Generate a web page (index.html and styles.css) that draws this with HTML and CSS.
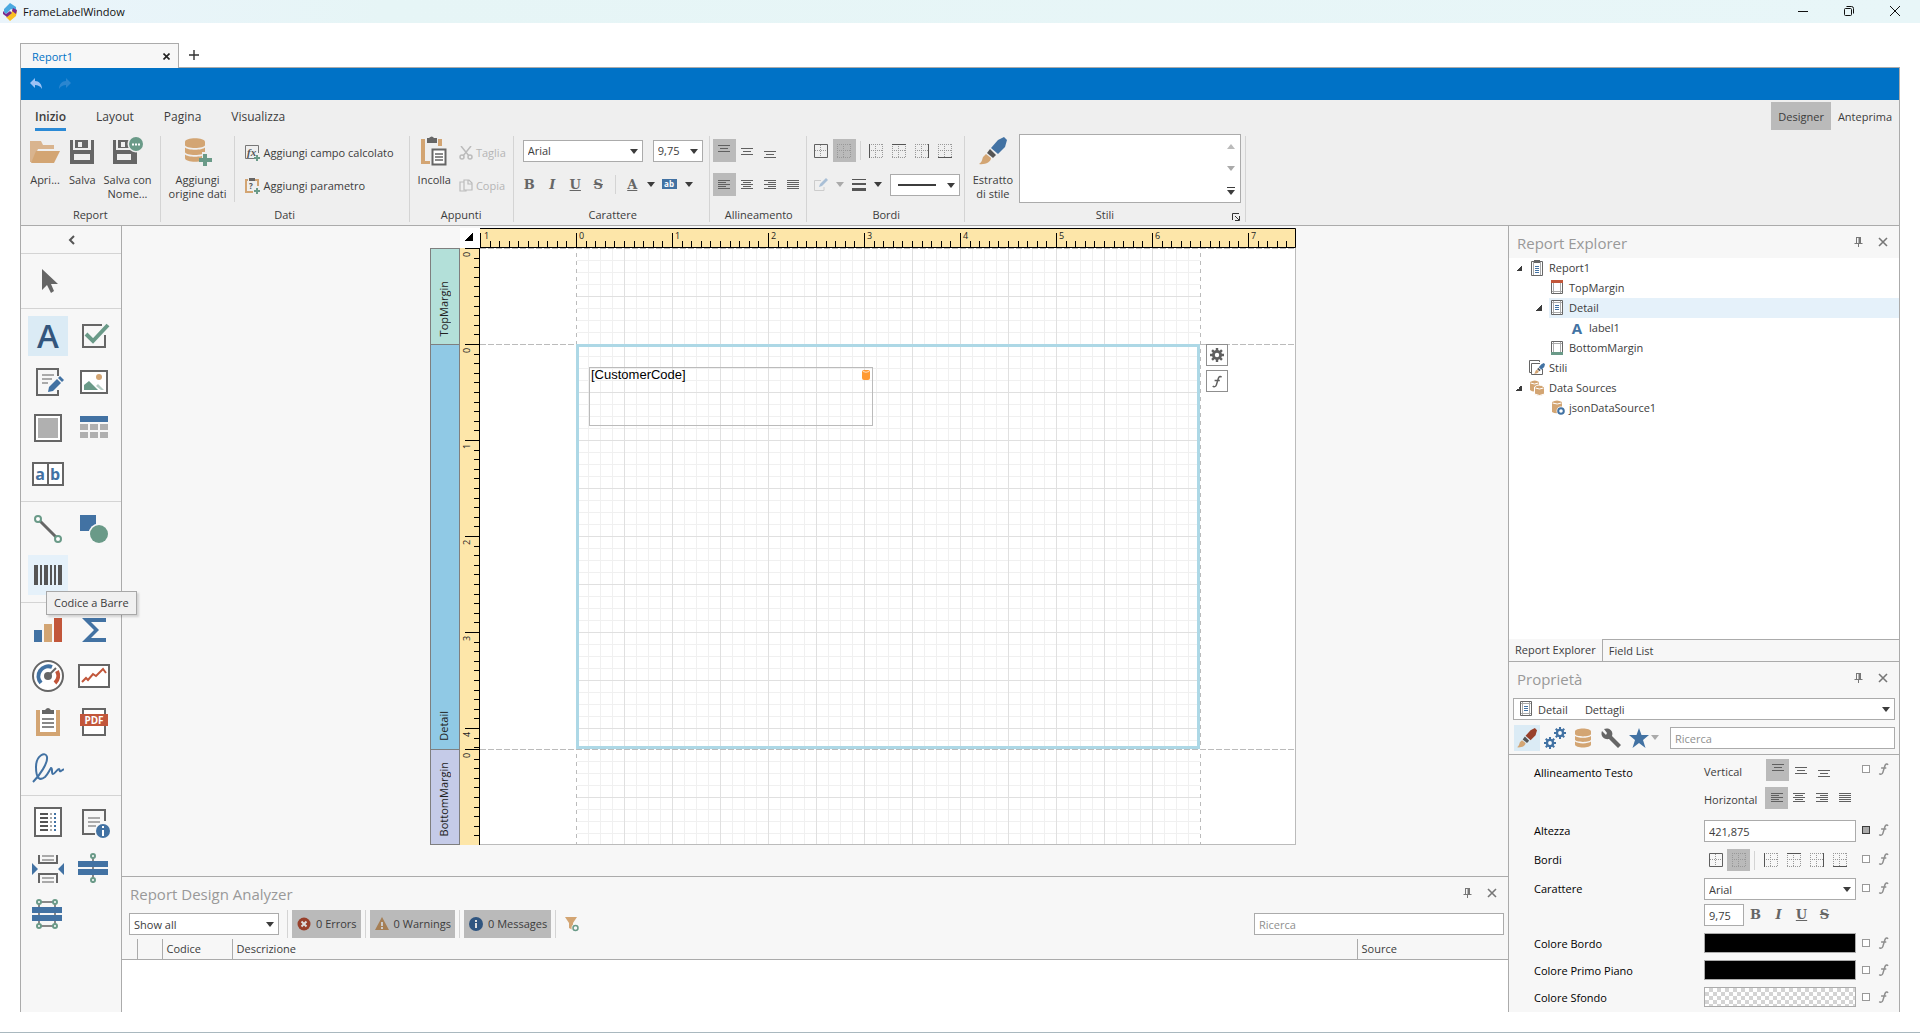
FILE: index.html
```html
<!DOCTYPE html>
<html lang="it">
<head>
    <meta charset="UTF-8">
    <meta name="viewport" content="width=device-width, initial-scale=1.0">
    <title>FrameLabelWindow</title>
    <link rel="stylesheet" href="styles.css">
</head>
<body>

    <!-- Shared icons -->
    <svg class="sprite" aria-hidden="true">
        <symbol id="i-pin" viewBox="0 0 9 10"><path d="M2 0h5v6h1.500v1h-3.500v3h-1v-3H.5V6H2zM3 1v5h1.500V1z" fill="#777" fill-rule="evenodd"/></symbol>
        <symbol id="i-close" viewBox="0 0 10 10"><path d="M1 1l8 8M9 1L1 9" stroke="#777" stroke-width="1.600" fill="none"/></symbol>
        <symbol id="i-top" viewBox="0 0 14 14"><path d="M1 1.500h12M3 4.500h8M1 7.500h12" stroke="#606060"/></symbol>
        <symbol id="i-middle" viewBox="0 0 14 14"><path d="M1 4.500h12M3 7.500h8M1 10.500h12" stroke="#606060"/></symbol>
        <symbol id="i-bottom" viewBox="0 0 14 14"><path d="M1 7.500h12M3 10.500h8M1 13.500h12" stroke="#606060"/></symbol>
        <symbol id="i-left" viewBox="0 0 14 14"><path d="M1 2.500h12M1 4.500h8M1 6.500h12M1 8.500h8M1 10.500h12" stroke="#606060"/></symbol>
        <symbol id="i-center" viewBox="0 0 14 14"><path d="M1 2.500h12M3 4.500h8M1 6.500h12M3 8.500h8M1 10.500h12" stroke="#606060"/></symbol>
        <symbol id="i-right" viewBox="0 0 14 14"><path d="M1 2.500h12M5 4.500h8M1 6.500h12M5 8.500h8M1 10.500h12" stroke="#606060"/></symbol>
        <symbol id="i-justify" viewBox="0 0 14 14"><path d="M1 2.500h12M1 4.500h12M1 6.500h12M1 8.500h12M1 10.500h12" stroke="#606060"/></symbol>
        <symbol id="i-dots" viewBox="0 0 14 14"><path d="M0 .5h14M0 6.500h14M0 13.500h14M.5 0v14M6.500 0v14M13.500 0v14" stroke="#999" stroke-dasharray="1 1" fill="none"/></symbol>
        <symbol id="i-ball" viewBox="0 0 14 14"><path d="M1 6.500h12M6.500 1v12" stroke="#999" stroke-dasharray="1 1"/><path d="M.5.5h13v13H.5z" stroke="#606060" fill="none"/></symbol>
        <symbol id="i-bleft" viewBox="0 0 14 14"><use href="#i-dots"/><path d="M.5 0v14" stroke="#555"/></symbol>
        <symbol id="i-btop" viewBox="0 0 14 14"><use href="#i-dots"/><path d="M0 .5h14" stroke="#555"/></symbol>
        <symbol id="i-bright" viewBox="0 0 14 14"><use href="#i-dots"/><path d="M13.500 0v14" stroke="#555"/></symbol>
        <symbol id="i-bbottom" viewBox="0 0 14 14"><use href="#i-dots"/><path d="M0 13.500h14" stroke="#555"/></symbol>
        <symbol id="i-func" viewBox="0 0 10 12"><path d="M9.500 1.800C8.800.6 7 .8 6.400 2.800L4.300 9.600C3.800 11.200 1.800 11.800.8 10.600M2.600 5h5.200" fill="none" stroke="currentColor" stroke-width="1.500"/></symbol>
        <symbol id="i-doc" viewBox="0 0 16 16"><path d="M1.500.5h11v14h-11z" fill="#fff" stroke="#666"/><path d="M3.500 1v13M10.500 1v13M2 2.500h10M2 12.500h10" stroke="#aaa"/><path d="M5 5.500h4M5 7.500h4M5 9.500h4" stroke="#4272a3"/></symbol>
        <symbol id="i-brush" viewBox="0 0 28 28"><path d="M25 0l3 3-2 7-7 7-7-6 7-8z" fill="currentColor"/><path d="M11 12l6 6-3 3-6-5z" fill="#555"/><path d="M7 17l5 4c0 4-6 7-12 6 3-2 3-4 4-7z" fill="#d3a573"/></symbol>
        <symbol id="i-db" viewBox="0 0 20 24"><path d="M0 4c0-5 20-5 20 0v3c0 4-20 4-20 0zM0 9.500c3 3 17 3 20 0V14c0 4-20 4-20 0zM0 16.500c3 3 17 3 20 0V20c0 5-20 5-20 0z" fill="#d3a573"/></symbol>
        <symbol id="i-gear" viewBox="0 0 14 14"><g fill="currentColor"><path d="M5.800 0h2.400v14H5.800zM0 5.800h14v2.400H0z"/><path d="M5.800 0h2.400v14H5.800zM0 5.800h14v2.400H0z" transform="rotate(45 7 7)"/><circle cx="7" cy="7" r="5"/></g><circle cx="7" cy="7" r="2.200" fill="#fff"/></symbol>
    </svg>

    <!-- Title bar -->
    <header class="titlebar">
        <svg class="app-logo" width="15" height="20" viewBox="0 0 15 20">
            <path d="M1 7l6-6 6 4v4l-5-2-5 5-2-2z" fill="#4aa8e0"/>
            <path d="M14 9l-1 5-6 5-4-4 5-4 2-4z" fill="#fbbf24"/>
            <path d="M0 9l3 3 4-3 2 2-5 4-4-3zM10 6l4 2-1 4-4-3z" fill="#7a2a8c"/>
        </svg>
        <span class="app-title">FrameLabelWindow</span>
        <button class="win-btn" aria-label="Minimize"><svg width="10" height="10"><path d="M0 5.500h10" stroke="#111"/></svg></button>
        <button class="win-btn" aria-label="Restore"><svg width="10" height="10" fill="none" stroke="#111"><rect x=".5" y="2.500" width="7" height="7" rx="1"/><path d="M2.500.5h5q2 0 2 2v5"/></svg></button>
        <button class="win-btn" aria-label="Close"><svg width="10" height="10"><path d="M0 0l10 10M10 0L0 10" stroke="#111"/></svg></button>
    </header>

    <main class="workspace">
        <!-- Document tabs -->
        <div class="doc-tabs">
            <div class="doc-tab"><span>Report1</span><button class="plain" aria-label="Close tab"><svg width="7" height="7"><path d="M.5.5l6 6M6.500.5l-6 6" stroke="#222" stroke-width="1.600"/></svg></button></div>
            <button class="plain add-tab" aria-label="New report"><svg width="10" height="10"><path d="M5 0v10M0 5h10" stroke="#333" stroke-width="1.400"/></svg></button>
        </div>

        <div class="designer">
            <!-- Quick access -->
            <div class="quickbar">
                <button class="plain" aria-label="Undo"><svg width="12" height="12"><path d="M0 5l5-5v3c4 0 7 3 7 8-2-3-4-4-7-4v3z" fill="#9cc2f5"/></svg></button>
                <button class="plain" aria-label="Redo"><svg width="12" height="12"><path d="M12 5L7 0v3C3 3 0 6 0 11c2-3 4-4 7-4v3z" fill="#2a86d0"/></svg></button>
            </div>

            <!-- Ribbon -->
            <div class="ribbon">
                <nav class="ribbon-tabs">
                    <a href="#" class="active">Inizio</a>
                    <a href="#">Layout</a>
                    <a href="#">Pagina</a>
                    <a href="#">Visualizza</a>
                    <span class="modes">
                        <button class="mode on">Designer</button>
                        <button class="mode">Anteprima</button>
                    </span>
                </nav>
                <div class="groups">
                    <section class="group">
                        <div class="group-body">
                            <button class="big">
                                <svg width="32" height="30"><path d="M1 26V5h11l2 4h11v4H9L3 26z" fill="#d9b48e"/><path d="M7 15h24l-6 12H2z" fill="#d3a573"/></svg>
                                Apri...
                            </button>
                            <button class="big">
                                <svg width="26" height="30"><path d="M1 4h3v10h18V4h3v24H1z" fill="#666"/><path d="M6 4h13v8H6z" fill="#666"/><path d="M9 6h4v5H9zM5 18h16v6H5z" fill="#efefef"/></svg>
                                Salva
                            </button>
                            <button class="big">
                                <svg width="32" height="30"><path d="M1 4h3v10h16V4h5v24H1z" fill="#666"/><path d="M6 4h13v8H6z" fill="#666"/><path d="M9 6h4v5H9zM5 18h14v6H5z" fill="#efefef"/><circle cx="24" cy="8" r="8.500" fill="#efefef"/><circle cx="24" cy="8" r="7" fill="#6a9a88"/><path d="M20 7.500h2v2h-2zM23 7.500h2v2h-2zM26 7.500h2v2h-2z" fill="#fff"/></svg>
                                Salva con<br>Nome...
                            </button>
                        </div>
                        <h3>Report</h3>
                    </section>

                    <section class="group">
                        <div class="group-body">
                            <button class="big">
                                <svg width="28" height="30"><use href="#i-db" x="1" y="2" width="20" height="24"/><path d="M18 16h9v6h-9z" fill="#efefef"/><path d="M19 18h4v4h5v4h-5v4h-4v-4h-4v-4h4z" fill="#6a9a88"/></svg>
                                Aggiungi<br>origine dati
                            </button>
                            <div class="small-list ruled">
                                <button class="small"><svg width="16" height="16"><path d="M9 13.500H.5V.5h13V8" fill="none" stroke="#777"/><text x="2" y="11" font-family="Liberation Serif, serif" font-style="italic" font-weight="bold" font-size="11" fill="#555">fx</text><path d="M12 10v6M9 13h6" stroke="#6a9a88" stroke-width="2"/></svg>Aggiungi campo calcolato</button>
                                <button class="small"><svg width="16" height="16"><path d="M3 2H1v12h7M10 2h3v6" fill="none" stroke="#d3a573" stroke-width="2"/><path d="M4 0h6v3H4z" fill="#666"/><text x="4" y="11" font-family="Open Sans, sans-serif" font-weight="bold" font-size="8" fill="#555">?</text><path d="M12 10v6M9 13h6" stroke="#6a9a88" stroke-width="2"/></svg>Aggiungi parametro</button>
                            </div>
                        </div>
                        <h3>Dati</h3>
                    </section>

                    <section class="group">
                        <div class="group-body">
                            <button class="big">
                                <svg width="28" height="30"><path d="M1 3h4v22h5v3H1zM18 3h4v7h-4z" fill="#d3a573"/><path d="M7 2h2q3-3 5 0h3v5H7z" fill="#666"/><path d="M12.500 13.500h13v15h-13z" fill="#fff" stroke="#666" stroke-width="2"/><path d="M15 18h8M15 21h8M15 24h8" stroke="#666" stroke-width="1.500"/></svg>
                                Incolla
                            </button>
                            <div class="small-list">
                                <button class="small" disabled><svg width="14" height="14" fill="none" stroke="#bbb" stroke-width="1.500"><path d="M2 0l8 10M12 0L4 10"/><circle cx="3" cy="11" r="2"/><circle cx="11" cy="11" r="2"/></svg>Taglia</button>
                                <button class="small" disabled><svg width="14" height="14" fill="#efefef" stroke="#bbb" stroke-width="1.200"><path d="M1 3h6v9H1z"/><path d="M5 1h5l3 3v7H5zM9 1v4h4"/></svg>Copia</button>
                            </div>
                        </div>
                        <h3>Appunti</h3>
                    </section>

                    <section class="group padded">
                        <div class="group-body rows">
                            <div class="line spread">
                                <span class="select font-name"><select aria-label="Font"><option>Arial</option></select></span>
                                <span class="select font-size"><select aria-label="Size"><option>9,75</option></select></span>
                            </div>
                            <div class="line">
                                <button class="glyph">B</button>
                                <button class="glyph"><i>I</i></button>
                                <button class="glyph"><u>U</u></button>
                                <button class="glyph"><s>S</s></button>
                                <span class="vsep"></span>
                                <button class="glyph"><u>A</u></button><button class="plain arrow" aria-label="Font colour"></button>
                                <button class="tool"><svg width="16" height="12"><path d="M0 0h15v10H0z" fill="#4272a3"/><text x="7" y="8" text-anchor="middle" font-family="Open Sans, sans-serif" font-weight="bold" font-size="8" fill="#fff">ab</text></svg></button><button class="plain arrow" aria-label="Highlight colour"></button>
                            </div>
                        </div>
                        <h3>Carattere</h3>
                    </section>

                    <section class="group tight">
                        <div class="group-body rows">
                            <div class="line">
                                <button class="tool on"><svg class="i14"><use href="#i-top"/></svg></button>
                                <button class="tool"><svg class="i14"><use href="#i-middle"/></svg></button>
                                <button class="tool"><svg class="i14"><use href="#i-bottom"/></svg></button>
                            </div>
                            <div class="line">
                                <button class="tool on"><svg class="i14"><use href="#i-left"/></svg></button>
                                <button class="tool"><svg class="i14"><use href="#i-center"/></svg></button>
                                <button class="tool"><svg class="i14"><use href="#i-right"/></svg></button>
                                <button class="tool"><svg class="i14"><use href="#i-justify"/></svg></button>
                            </div>
                        </div>
                        <h3>Allineamento</h3>
                    </section>

                    <section class="group tight">
                        <div class="group-body rows">
                            <div class="line">
                                <button class="tool"><svg class="i14"><use href="#i-ball"/></svg></button>
                                <button class="tool on"><svg class="i14"><use href="#i-dots"/></svg></button>
                                <span class="vsep"></span>
                                <button class="tool"><svg class="i14"><use href="#i-bleft"/></svg></button>
                                <button class="tool"><svg class="i14"><use href="#i-btop"/></svg></button>
                                <button class="tool"><svg class="i14"><use href="#i-bright"/></svg></button>
                                <button class="tool"><svg class="i14"><use href="#i-bbottom"/></svg></button>
                            </div>
                            <div class="line">
                                <button class="tool" disabled><svg class="i14" viewBox="0 0 14 14"><path d="M7 2.500H.5v10H10V9" fill="none" stroke="#ccc"/><path d="M5 9l1-3 6-6 2 2-6 6z" fill="#a9bfd6"/></svg></button><button class="plain arrow off" disabled aria-label="Border colour"></button>
                                <button class="tool"><svg class="i14" viewBox="0 0 14 14"><path d="M0 1h14v1H0zM0 5h14v2H0zM0 10h14v3H0z" fill="#555"/></svg></button><button class="plain arrow" aria-label="Border width"></button>
                                <span class="select line-style"><select aria-label="Border style"><option></option></select></span>
                            </div>
                        </div>
                        <h3>Bordi</h3>
                    </section>

                    <section class="group">
                        <div class="group-body">
                            <button class="big">
                                <svg class="blue" width="28" height="30"><use href="#i-brush" y="1" width="28" height="28"/></svg>
                                Estratto<br>di stile
                            </button>
                            <div class="gallery">
                                <button class="plain arrow up off" aria-label="Scroll up"></button>
                                <button class="plain arrow off" aria-label="Scroll down"></button>
                                <button class="plain arrow more" aria-label="More styles"></button>
                            </div>
                        </div>
                        <h3>Stili</h3>
                        <button class="plain launcher" aria-label="Styles"><svg width="8" height="8"><path d="M.5 7V.5H7M3 3l4 4M7.500 3v4.500H3" stroke="#333" fill="none"/></svg></button>
                    </section>
                </div>
            </div>

            <div class="panes">
                <!-- Toolbox -->
                <aside class="toolbox">
                    <button class="plain collapse" aria-label="Collapse"><svg width="7" height="10"><path d="M6 1L2 5l4 4" fill="none" stroke="#555" stroke-width="2"/></svg></button>
                    <div class="tools">
                        <button><svg width="32" height="32" viewBox="0 0 32 32"><path d="M10 4l16 15h-7l3 7-3 2-4-8-5 5z" fill="#666"/></svg></button>
                    </div>
                    <div class="tools">
                        <button class="on letter">A</button>
                        <button><svg width="32" height="32"><path d="M24 5H5v22h22V15" fill="none" stroke="#666" stroke-width="2"/><path d="M8 14l7 7L30 5" fill="none" stroke="#6a9a88" stroke-width="4"/></svg></button>
                        <button><svg width="32" height="32"><path d="M26 10V3H5v26h21v-5" fill="none" stroke="#666" stroke-width="2"/><path d="M10 9h12M10 13h10M10 17h6" stroke="#aaa" stroke-width="2"/><path d="M16 26l1-5 8-8 4 4-8 8zM26 12l2-2 4 4-2 2z" fill="#4272a3"/></svg></button>
                        <button><svg width="32" height="32"><path d="M3 5h26v22H3z" fill="#fff" stroke="#666" stroke-width="2"/><path d="M6 24v-5l5-4 9 9z" fill="#6a9a88"/><path d="M18 20l2-2 6 6h-3z" fill="#b5ccc4"/><circle cx="21" cy="11" r="3" fill="#d3a573"/></svg></button>
                        <button><svg width="32" height="32"><path d="M3 3h26v26H3z" fill="#fff" stroke="#666" stroke-width="2"/><path d="M6 6h20v20H6z" fill="#b0b0b0"/></svg></button>
                        <button><svg width="32" height="32"><path d="M2 4h28v6H2z" fill="#4272a3"/><path d="M2 12h8v6H2zM12 12h8v6h-8zM22 12h8v6h-8zM2 20h8v6H2zM12 20h8v6h-8zM22 20h8v6h-8z" fill="#b0b0b0"/></svg></button>
                        <button><svg width="32" height="32"><path d="M1 5h30v22H1zM16 5v22" fill="#fff" stroke="#666" stroke-width="2"/><text x="8" y="22" text-anchor="middle" font-family="Open Sans, sans-serif" font-weight="bold" font-size="16" fill="#4272a3">a</text><text x="23" y="22" text-anchor="middle" font-family="Open Sans, sans-serif" font-weight="bold" font-size="16" fill="#4272a3">b</text></svg></button>
                    </div>
                    <div class="tools">
                        <button><svg width="32" height="32"><path d="M6 6l20 20" stroke="#666" stroke-width="3"/><g fill="#fff" stroke="#6a9a88" stroke-width="2"><circle cx="6" cy="6" r="3"/><circle cx="26" cy="26" r="3"/></g></svg></button>
                        <button><svg width="32" height="32"><path d="M2 2h16v16H2z" fill="#4272a3"/><circle cx="21" cy="21" r="10.500" fill="#f7f7f7"/><circle cx="21" cy="21" r="9" fill="#6a9a88"/></svg></button>
                        <button class="hover" aria-describedby="tip"><svg width="32" height="32"><path d="M2 6h4v20H2zM8 6h2v20H8zM12 6h4v20h-4zM18 6h2v20h-2zM22 6h2v20h-2zM26 6h4v20h-4z" fill="#555"/></svg></button>
                        <span class="tooltip" id="tip" role="tooltip">Codice a Barre</span>
                    </div>
                    <div class="tools">
                        <button><svg width="32" height="32"><path d="M2 16h8v12H2z" fill="#4272a3"/><path d="M12 10h8v18h-8z" fill="#d3a573"/><path d="M22 4h8v24h-8z" fill="#c2563a"/></svg></button>
                        <button><svg width="32" height="32"><path d="M4 4h24v4H13l8 8-8 8h15v4H4l12-12z" fill="#4272a3"/></svg></button>
                        <button><svg width="32" height="32" fill="none"><circle cx="16" cy="16" r="15" fill="#fff" stroke="#666" stroke-width="2"/><path d="M9 23A10 10 0 0 1 20 7" stroke="#4272a3" stroke-width="4"/><path d="M25 11a10 10 0 0 1-2 12" stroke="#c2563a" stroke-width="4"/><path d="M16 16l8-8" stroke="#666" stroke-width="2"/><circle cx="16" cy="16" r="4" fill="#666"/></svg></button>
                        <button><svg width="32" height="32" fill="none"><path d="M1 5h30v22H1z" fill="#fff" stroke="#666" stroke-width="2"/><path d="M4 22l4-4 2 2 5-6 3 2 7-7 3 4" stroke="#c2563a" stroke-width="2"/></svg></button>
                        <button><svg width="32" height="32"><path d="M4 4h6v22h12V4h6v26H4z" fill="#d3a573"/><path d="M8 4h16v22H8z" fill="#fff"/><path d="M10 4h3q3-4 6 0h3v4H10z" fill="#666"/><path d="M10 13h12M10 17h12M10 21h12" stroke="#888" stroke-width="2"/></svg></button>
                        <button><svg width="32" height="32"><path d="M5 3h22v26H5z" fill="#fff" stroke="#666" stroke-width="2"/><path d="M2 8h28v12H2z" fill="#c2563a"/><text x="16" y="18" text-anchor="middle" font-family="Open Sans, sans-serif" font-weight="bold" font-size="10" fill="#fff">PDF</text></svg></button>
                        <button><svg width="32" height="32"><path d="M1 30C8 23 16 11 15 5 14-1 4 3 4 15c0 12 4 14 9 10 3-3 4-6 6-9 2 0 0 6 2 6s4-5 6-5c1 0 0 3 2 2l3-2" fill="none" stroke="#4272a3" stroke-width="2"/></svg></button>
                    </div>
                    <div class="tools">
                        <button><svg width="32" height="32"><path d="M3 1h26v28H3z" fill="#fff" stroke="#666" stroke-width="2"/><path d="M8 7h8M8 11h8M8 15h8M8 19h8M8 23h8" stroke="#555" stroke-width="2"/><path d="M19 6v18" stroke="#aaa" stroke-width="2" stroke-dasharray="2"/><path d="M23 6v18" stroke="#4272a3" stroke-width="2" stroke-dasharray="2"/></svg></button>
                        <button><svg width="32" height="32"><path d="M27 14V3H5v24h12" fill="none" stroke="#666" stroke-width="2"/><path d="M10 11h12M10 15h12M10 19h8" stroke="#aaa" stroke-width="2"/><circle cx="25" cy="24" r="7" fill="#4272a3"/><path d="M24 19h2v2h-2zM24 23h2v6h-2z" fill="#fff"/></svg></button>
                        <button><svg width="32" height="32"><path d="M0 10l6 6-6 6zM32 10l-6 6 6 6z" fill="#4272a3"/><path d="M7 2v8h18V2M7 30v-9h18v9" fill="none" stroke="#666" stroke-width="2"/><path d="M10 3h12M10 7h12M10 25h12M10 29h12" stroke="#aaa" stroke-width="2"/></svg></button>
                        <button><svg width="32" height="32"><path d="M15 2v28" stroke="#888" stroke-width="2"/><path d="M0 8h30v6H0zM0 16h30v6H0z" fill="#4272a3"/><g fill="#fff" stroke="#6a9a88" stroke-width="2"><circle cx="15" cy="3" r="2"/><circle cx="15" cy="27" r="2"/></g></svg></button>
                        <button><svg width="32" height="32"><path d="M7 3h16v24H7z" fill="none" stroke="#888" stroke-width="2"/><path d="M0 8h30v6H0zM0 16h30v6H0z" fill="#4272a3"/><g fill="#fff" stroke="#6a9a88" stroke-width="2"><circle cx="7" cy="3" r="2"/><circle cx="23" cy="3" r="2"/><circle cx="7" cy="27" r="2"/><circle cx="23" cy="27" r="2"/></g></svg></button>
                    </div>
                </aside>

                <!-- Design surface and analyzer -->
                <div class="center">
                    <div class="surface">
                        <div class="canvas">
                            <div class="canvas-head">
                                <div class="corner"></div>
                                <svg class="ruler-x" width="816" height="20">
                                    <defs><path id="inch" d="M.5 5v15M10.500 13v7M19.500 13v7M29.500 13v7M38.500 13v7M48.500 13v7M58.500 13v7M67.500 13v7M77.500 13v7M86.500 13v7" stroke="#000"/></defs>
                                    <rect width="816" height="20" fill="#fde6a9"/>
                                    <use href="#inch"/><use href="#inch" x="96"/><use href="#inch" x="192"/><use href="#inch" x="288"/><use href="#inch" x="384"/><use href="#inch" x="480"/><use href="#inch" x="576"/><use href="#inch" x="672"/><use href="#inch" x="768"/>
                                    <path d="M0 .5h815.500v19H0" fill="none" stroke="#000"/>
                                    <g class="ruler-text"><text x="4" y="11">1</text><text x="99" y="11">0</text><text x="195" y="11">1</text><text x="291" y="11">2</text><text x="387" y="11">3</text><text x="483" y="11">4</text><text x="579" y="11">5</text><text x="675" y="11">6</text><text x="771" y="11">7</text></g>
                                </svg>
                            </div>
                            <div class="band top-band">
                                <div class="band-name"><span>TopMargin</span></div>
                                <svg class="ruler-y" width="20" height="96">
                                    <defs><path id="inch-y" d="M5 .5h14M14 10.500h5M14 19.500h5M14 29.500h5M14 38.500h5M14 48.500h5M14 58.500h5M14 67.500h5M14 77.500h5M14 86.500h5" stroke="#000"/></defs>
                                    <use href="#inch-y"/><path d="M19.500 0v96" stroke="#000"/>
                                    <g class="ruler-text"><text transform="translate(10 9) rotate(-90)">0</text></g>
                                </svg>
                                <div class="page"><div class="grid"></div></div>
                            </div>
                            <div class="band detail-band">
                                <div class="band-name"><span>Detail</span></div>
                                <svg class="ruler-y" width="20" height="405">
                                    <use href="#inch-y"/><use href="#inch-y" y="96"/><use href="#inch-y" y="192"/><use href="#inch-y" y="288"/><use href="#inch-y" y="384"/><path d="M19.500 0v405" stroke="#000"/>
                                    <g class="ruler-text"><text transform="translate(10 9) rotate(-90)">0</text><text transform="translate(10 105) rotate(-90)">1</text><text transform="translate(10 201) rotate(-90)">2</text><text transform="translate(10 297) rotate(-90)">3</text><text transform="translate(10 393) rotate(-90)">4</text></g>
                                </svg>
                                <div class="page">
                                    <div class="grid"><div class="selection"></div></div>
                                    <div class="label-item">[CustomerCode]<svg width="8" height="12"><rect y="2" width="8" height="10" rx="2" fill="#ff9a33"/><path d="M1 3.500q3 1.500 6 0" fill="none" stroke="#ffe0c0"/></svg></div>
                                    <div class="smart-tags">
                                        <button aria-label="Settings"><svg width="14" height="14"><use href="#i-gear"/></svg></button>
                                        <button aria-label="Expression"><svg width="10" height="13"><use href="#i-func"/></svg></button>
                                    </div>
                                </div>
                            </div>
                            <div class="band bottom-band">
                                <div class="band-name"><span>BottomMargin</span></div>
                                <svg class="ruler-y" width="20" height="96">
                                    <use href="#inch-y"/><path d="M19.500 0v96" stroke="#000"/>
                                    <g class="ruler-text"><text transform="translate(10 9) rotate(-90)">0</text></g>
                                </svg>
                                <div class="page"><div class="grid"></div></div>
                            </div>
                        </div>
                    </div>

                    <section class="analyzer">
                        <div class="pane-title"><h2>Report Design Analyzer</h2><button class="plain" aria-label="Pin"><svg width="9" height="10"><use href="#i-pin"/></svg></button><button class="plain" aria-label="Close"><svg width="10" height="10"><use href="#i-close"/></svg></button></div>
                        <div class="analyzer-bar">
                            <span class="select show-all"><select aria-label="Show"><option>Show all</option></select></span>
                            <span class="vsep"></span>
                            <button class="filter-btn"><svg width="14" height="14"><circle cx="7" cy="7" r="6.500" fill="#98402b"/><path d="M4.500 4.500l5 5M9.500 4.500l-5 5" stroke="#ddd" stroke-width="2"/></svg>0 Errors</button>
                            <span class="vsep"></span>
                            <button class="filter-btn"><svg width="14" height="14"><path d="M7 0l7 13H0z" fill="#a67f55"/><path d="M6 5h2v4H6zM6 10h2v2H6z" fill="#ccc"/></svg>0 Warnings</button>
                            <span class="vsep"></span>
                            <button class="filter-btn"><svg width="14" height="14"><circle cx="7" cy="7" r="7" fill="#2f5580"/><path d="M6 3h2v2H6zM6 6h2v5H6z" fill="#ddd"/></svg>0 Messages</button>
                            <span class="vsep"></span>
                            <button class="plain clear-filter" aria-label="Clear filter"><svg width="16" height="16"><path d="M1 1h12L9 7v7l-4-2V7z" fill="#d3a573"/><circle cx="11.500" cy="12" r="4" fill="#f7f7f7"/><circle cx="11.500" cy="12" r="2.500" fill="none" stroke="#6a9a88" stroke-width="1.500"/></svg></button>
                            <input type="search" placeholder="Ricerca" aria-label="Ricerca">
                        </div>
                        <table>
                            <thead><tr><th class="c-icon"></th><th class="c-mark"></th><th class="c-code">Codice</th><th>Descrizione</th><th class="c-source">Source</th></tr></thead>
                        </table>
                    </section>
                </div>

                <!-- Explorer and properties -->
                <aside class="side">
                    <section class="explorer">
                        <div class="pane-title"><h2>Report Explorer</h2><button class="plain" aria-label="Pin"><svg width="9" height="10"><use href="#i-pin"/></svg></button><button class="plain" aria-label="Close"><svg width="10" height="10"><use href="#i-close"/></svg></button></div>
                        <ul class="tree">
                            <li class="open"><span><svg class="i16"><path d="M2.500 1.500h11v14h-11z" fill="#fff" stroke="#666"/><path d="M4.500 2v13M11.500 2v13" stroke="#aaa"/><path d="M5 0h6v3H5z" fill="#666"/><path d="M6 6.500h4M6 8.500h4M6 10.500h4M6 12.500h4" stroke="#4272a3"/></svg>Report1</span></li>
                            <li class="l1"><span><svg class="i16"><path d="M2.500 1.500h11v12h-11z" fill="#fff" stroke="#666"/><path d="M4.500 3v10M11.500 3v10M3 11.500h10" stroke="#aaa"/><path d="M2 0h12v3H2z" fill="#c2563a"/></svg>TopMargin</span></li>
                            <li class="l1 open selected"><span><svg class="i16"><use href="#i-doc" x="1" width="16" height="16"/></svg>Detail</span></li>
                            <li class="l2"><span><b class="label-icon">A</b>label1</span></li>
                            <li class="l1"><span><svg class="i16"><path d="M2.500 1.500h11v12h-11z" fill="#fff" stroke="#666"/><path d="M4.500 2v10M11.500 2v10M3 3.500h10" stroke="#aaa"/><path d="M2 12h12v3H2z" fill="#6a9a88"/></svg>BottomMargin</span></li>
                            <li><span><svg class="i16 blue"><path d="M3 12.500H.5V.5h10V2M11 3.500H2.500v11h11V9" fill="none" stroke="#666"/><use href="#i-brush" x="5" y="3" width="11" height="11"/></svg>Stili</span></li>
                            <li class="open"><span><svg class="i16"><path d="M1 2q5-3 9 0v8q-5 3-9 0z" fill="#d3a573"/><path d="M1.500 3q4 2 8 0" stroke="#fff" fill="none"/><path d="M5.500 7q4-4 10 0v7q-5 3-10 0z" fill="#d3a573" stroke="#fff"/><path d="M6.500 8q4 2 8 0" stroke="#fff" fill="none"/></svg>Data Sources</span></li>
                            <li class="l1"><span><svg class="i16"><path d="M3 2q5-3 10 0v9q-5 4-10 1z" fill="#d3a573"/><path d="M3.500 3q5 2 9 0" stroke="#fff" fill="none"/><circle cx="12" cy="11" r="4.500" fill="#fff"/><circle cx="12" cy="11" r="2.800" fill="none" stroke="#4272a3" stroke-width="2"/></svg>jsonDataSource1</span></li>
                        </ul>
                        <div class="side-tabs"><button class="current">Report Explorer</button><button>Field List</button></div>
                    </section>

                    <section class="properties">
                        <div class="pane-title"><h2>Proprietà</h2><button class="plain" aria-label="Pin"><svg width="9" height="10"><use href="#i-pin"/></svg></button><button class="plain" aria-label="Close"><svg width="10" height="10"><use href="#i-close"/></svg></button></div>
                        <div class="object-pick select">
                            <svg class="i16"><use href="#i-doc"/></svg>
                            <select aria-label="Object"><option>Detail&nbsp;&nbsp;&nbsp;&nbsp;&nbsp;&nbsp;Dettagli</option></select>
                        </div>
                        <div class="prop-bar">
                            <button class="on"><svg class="red" width="22" height="20"><use href="#i-brush" width="22" height="20"/></svg></button>
                            <button><svg class="blue" width="22" height="22"><use href="#i-gear" x="10" y="0" width="12" height="12"/><use href="#i-gear" x="0" y="10" width="12" height="12"/></svg></button>
                            <button><svg width="16" height="20"><use href="#i-db" width="16" height="20"/></svg></button>
                            <button><svg width="20" height="20"><path d="M6 5l-3-4C7-1 13 2 11 8l9 9-3 3-9-9C3 12-1 8 1 3l4 4z" fill="#666"/></svg></button>
                            <button><svg width="20" height="20"><path d="M10 0l2.500 7H20l-6 5 2.500 8L10 15l-6.500 5L6 12 0 7h7.500z" fill="#4272a3"/></svg></button>
                            <button class="plain arrow off" aria-label="Favorites"></button>
                            <input type="search" placeholder="Ricerca" aria-label="Ricerca">
                        </div>
                        <div class="prop-list">
                            <div class="prop first">
                                <span class="name">Allineamento Testo</span>
                                <div class="value">
                                    <div class="line"><span class="sub">Vertical</span>
                                        <button class="tool on"><svg class="i14"><use href="#i-top"/></svg></button>
                                        <button class="tool"><svg class="i14"><use href="#i-middle"/></svg></button>
                                        <button class="tool"><svg class="i14"><use href="#i-bottom"/></svg></button>
                                    </div>
                                    <div class="line"><span class="sub">Horizontal</span>
                                        <button class="tool on"><svg class="i14"><use href="#i-left"/></svg></button>
                                        <button class="tool"><svg class="i14"><use href="#i-center"/></svg></button>
                                        <button class="tool"><svg class="i14"><use href="#i-right"/></svg></button>
                                        <button class="tool"><svg class="i14"><use href="#i-justify"/></svg></button>
                                    </div>
                                </div>
                                <input type="checkbox" aria-label="Allineamento Testo"><svg class="func"><use href="#i-func"/></svg>
                            </div>
                            <div class="prop">
                                <label class="name" for="height">Altezza</label>
                                <div class="value"><input type="text" id="height" value="421,875"></div>
                                <input type="checkbox" checked aria-label="Altezza"><svg class="func"><use href="#i-func"/></svg>
                            </div>
                            <div class="prop">
                                <span class="name">Bordi</span>
                                <div class="value">
                                    <div class="line">
                                        <button class="tool"><svg class="i14"><use href="#i-ball"/></svg></button>
                                        <button class="tool on"><svg class="i14"><use href="#i-dots"/></svg></button>
                                        <span class="vsep"></span>
                                        <button class="tool"><svg class="i14"><use href="#i-bleft"/></svg></button>
                                        <button class="tool"><svg class="i14"><use href="#i-btop"/></svg></button>
                                        <button class="tool"><svg class="i14"><use href="#i-bright"/></svg></button>
                                        <button class="tool"><svg class="i14"><use href="#i-bbottom"/></svg></button>
                                    </div>
                                </div>
                                <input type="checkbox" aria-label="Bordi"><svg class="func"><use href="#i-func"/></svg>
                            </div>
                            <div class="prop">
                                <label class="name" for="font">Carattere</label>
                                <div class="value">
                                    <span class="select"><select id="font"><option>Arial</option></select></span>
                                    <div class="line">
                                        <input type="text" class="size" value="9,75" aria-label="Size">
                                        <button class="glyph">B</button>
                                        <button class="glyph"><i>I</i></button>
                                        <button class="glyph"><u>U</u></button>
                                        <button class="glyph"><s>S</s></button>
                                    </div>
                                </div>
                                <input type="checkbox" aria-label="Carattere"><svg class="func"><use href="#i-func"/></svg>
                            </div>
                            <div class="prop">
                                <span class="name">Colore Bordo</span>
                                <div class="value"><button class="swatch" aria-label="Colore Bordo"></button></div>
                                <input type="checkbox" aria-label="Colore Bordo"><svg class="func"><use href="#i-func"/></svg>
                            </div>
                            <div class="prop">
                                <span class="name">Colore Primo Piano</span>
                                <div class="value"><button class="swatch" aria-label="Colore Primo Piano"></button></div>
                                <input type="checkbox" aria-label="Colore Primo Piano"><svg class="func"><use href="#i-func"/></svg>
                            </div>
                            <div class="prop">
                                <span class="name">Colore Sfondo</span>
                                <div class="value"><button class="swatch clear" aria-label="Colore Sfondo"></button></div>
                                <input type="checkbox" aria-label="Colore Sfondo"><svg class="func"><use href="#i-func"/></svg>
                            </div>
                        </div>
                    </section>
                </aside>
            </div>
        </div>
    </main>

</body>
</html>
```

FILE: styles.css
```css
* {
    box-sizing: border-box;
}
body {
    font-family: "Open Sans", "Noto Sans", sans-serif;
    font-size: 11px;
    line-height: 14px;
    color: #3c3c3c;
    margin: 0;
    height: 100vh;
    display: flex;
    flex-direction: column;
    background: white;
    border-bottom: 1px solid #a9b8bf;
    overflow: hidden;
}
button, input, select {
    font: inherit;
    color: inherit;
    margin: 0;
}
button {
    background: none;
    border: none;
    padding: 0;
    display: flex;
    align-items: center;
    justify-content: center;
}
svg {
    display: block;
    flex: none;
}
h2, h3 {
    margin: 0;
    font-weight: normal;
}
.sprite {
    position: absolute;
    width: 0;
    height: 0;
}
.i14 {
    width: 14px;
    height: 14px;
}
.i16 {
    width: 16px;
    height: 16px;
}
.blue {
    color: #4272a3;
}
.red {
    color: #98402b;
}

/* Title bar */
.titlebar {
    height: 23px;
    flex: none;
    display: flex;
    align-items: center;
    padding: 0 2px 0 3px;
    background: linear-gradient(90deg, #eaf4fb, #e6f5f6 20%, #e8f6f8);
}
.app-title {
    flex: 1;
    margin-left: 5px;
    color: #111;
}
.win-btn {
    width: 46px;
    height: 22px;
    padding-bottom: 2px;
}

.workspace {
    flex: 1;
    min-height: 0;
    display: flex;
    flex-direction: column;
    padding: 20px 20px;
}
.doc-tabs {
    display: flex;
    height: 25px;
    flex: none;
}
.doc-tab {
    width: 159px;
    display: flex;
    align-items: center;
    justify-content: space-between;
    padding: 1px 8px 0 11px;
    background: #f7f7f7;
    border: 1px solid #ababab;
    border-bottom: none;
    color: #0072c6;
}
.add-tab {
    width: 29px;
    border-bottom: 1px solid #ababab;
}
.doc-tabs::after {
    content: "";
    flex: 1;
    border-bottom: 1px solid #ababab;
}
.designer {
    flex: 1;
    min-height: 0;
    display: flex;
    flex-direction: column;
    border: 1px solid #ababab;
    border-width: 0 1px;
}
.quickbar {
    height: 32px;
    flex: none;
    display: flex;
    align-items: center;
    gap: 17px;
    padding-left: 9px;
    background: #0072c6;
}

/* Ribbon */
.ribbon {
    height: 126px;
    flex: none;
    background: #efefef;
    border-bottom: 1px solid #ababab;
}
.ribbon-tabs {
    display: flex;
    align-items: flex-start;
    height: 33px;
    font-size: 12px;
    gap: 30px;
    padding-left: 14px;
}
.ribbon-tabs a {
    color: #3c3c3c;
    text-decoration: none;
    padding: 10px 0 4px;
    border-bottom: 3px solid transparent;
}
.ribbon-tabs .active {
    font-weight: 600;
    border-color: #2b8ad6;
}
.modes {
    display: flex;
    margin: 2px 0 0 auto;
}
.mode {
    height: 28px;
    padding: 1px 7px 0;
    font-size: 11px;
}
.mode.on {
    background: #bababa;
}
.groups {
    display: flex;
    height: 92px;
}
.group {
    position: relative;
    display: flex;
    flex-direction: column;
    padding: 0 4px;
    margin: 3px 0;
    border-right: 1px solid #d4d4d4;
}
.group.padded {
    padding: 0 6px 0 9px;
}
.group.tight {
    padding: 0 1px 0 3px;
}
.group-body {
    flex: 1;
    display: flex;
    align-items: flex-start;
}
.group h3 {
    font-size: 11px;
    text-align: center;
}
.big {
    flex-direction: column;
    line-height: 14px;
    padding: 0 4px;
}
.big svg {
    margin-bottom: 7px;
}
.small-list {
    display: flex;
    flex-direction: column;
    justify-content: space-around;
    height: 66px;
    padding-left: 4px;
    align-items: flex-start;
}
.small-list.ruled {
    border-left: 1px solid #d4d4d4;
    padding: 0 8px 0 10px;
    margin-left: 3px;
}
.small {
    gap: 3px;
    padding-right: 3px;
}
.small:disabled {
    color: #b5b5b5;
}
.group-body.rows {
    flex-direction: column;
    justify-content: flex-start;
    gap: 11px;
    padding-top: 3px;
}
.line {
    display: flex;
    align-items: center;
    height: 23px;
}
.spread {
    gap: 10px;
}
.tool {
    width: 23px;
    height: 23px;
}
.tool.on {
    background: #bababa;
}
.glyph {
    width: 23px;
    height: 23px;
    font-family: "DejaVu Serif", serif;
    font-weight: bold;
    font-size: 13px;
    color: #666;
}
.padded .glyph:first-child {
    margin-left: -5px;
}
.vsep {
    width: 1px;
    height: 19px;
    margin: 0 4px;
    background: #d4d4d4;
}
.padded .vsep {
    margin: 0 5px;
}
.arrow {
    width: 15px;
    height: 22px;
}
.arrow::after {
    content: "";
    border: 4px solid transparent;
    border-top: 5px solid #3c3c3c;
    border-bottom: none;
}
.arrow.off::after {
    border-top-color: #aaa;
}
.arrow.up::after {
    border-top: none;
    border-bottom: 5px solid #bbb;
}
.arrow.more {
    flex-direction: column;
    gap: 2px;
}
.arrow.more::before {
    content: "";
    width: 8px;
    height: 1px;
    background: #3c3c3c;
}
.select {
    position: relative;
    display: block;
}
.select::after {
    content: "";
    position: absolute;
    right: 5px;
    top: 9px;
    border: 4px solid transparent;
    border-top: 5px solid #3c3c3c;
    border-bottom: none;
    pointer-events: none;
}
select, input[type="text"], input[type="search"] {
    appearance: none;
    width: 100%;
    height: 22px;
    padding: 1px 4px 0;
    border: 1px solid #ababab;
    border-radius: 0;
    background: white;
    outline: none;
}
input::placeholder {
    color: #8f8f8f;
}
.font-name {
    width: 120px;
}
.font-size {
    width: 50px;
}
.line-style {
    width: 70px;
    margin: 0 3px 0 4px;
}
.line-style::before {
    content: "";
    position: absolute;
    left: 8px;
    top: 10px;
    width: 38px;
    height: 2px;
    background: #3c3c3c;
}
.gallery {
    width: 222px;
    height: 69px;
    margin: -2px 0 0 2px;
    background: white;
    border: 1px solid #ababab;
    display: flex;
    flex-direction: column;
    align-items: flex-end;
    justify-content: space-around;
    padding-right: 2px;
}
.launcher {
    position: absolute;
    right: 5px;
    bottom: 1px;
}

/* Panes */
.panes {
    flex: 1;
    min-height: 0;
    display: flex;
    background: #f7f7f7;
}
.toolbox {
    width: 101px;
    flex: none;
    border-right: 1px solid #ababab;
}
.collapse {
    width: 100%;
    height: 28px;
    border-bottom: 1px solid #d4d4d4;
}
.tools {
    position: relative;
    display: grid;
    grid-template-columns: 40px 40px;
    gap: 6px;
    padding: 7px;
    border-bottom: 1px solid #d4d4d4;
}
.tools:last-child {
    border-bottom: none;
}
.tools button {
    width: 40px;
    height: 40px;
}
.tools .on {
    background: #dbebf5;
}
.tools .hover {
    background: #e5f1fa;
}
.tools .letter {
    font-size: 33px;
    line-height: 40px;
    font-weight: 600;
    color: #33567d;
}
.tooltip {
    position: absolute;
    left: 25px;
    top: 89px;
    z-index: 2;
    padding: 4px 7px;
    white-space: nowrap;
    background: #f0f0f0;
    border: 1px solid #a8a8a8;
    box-shadow: 2px 2px 2px rgba(0,0,0,0.15);
}
.center {
    flex: 1;
    min-width: 0;
    display: flex;
    flex-direction: column;
}
.surface {
    flex: 1;
    min-height: 0;
    overflow: hidden;
    display: flex;
    justify-content: center;
    align-items: flex-start;
    padding: 2px 0 0 96px;
}

/* Report canvas */
.canvas-head {
    display: flex;
    justify-content: flex-end;
}
.corner {
    width: 20px;
    height: 20px;
    background: linear-gradient(135deg, white 50%, black 50%) 5px 5px / 8px 8px no-repeat white;
}
.ruler-text {
    font-size: 9px;
    fill: #222;
}
.band {
    display: flex;
    height: 96px;
}
.detail-band {
    height: 405px;
}
.band-name {
    width: 30px;
    border: 1px solid #7f7f7f;
    border-bottom: none;
    background: #b3e0d9;
    color: #222;
    display: flex;
    align-items: flex-end;
    justify-content: center;
    padding: 0 3px 8px 0;
}
.band-name span {
    writing-mode: vertical-rl;
    transform: rotate(180deg);
}
.detail-band .band-name {
    background: #90c9e5;
}
.bottom-band .band-name {
    background: #c5cbe8;
    border-bottom: 1px solid #7f7f7f;
}
.ruler-y {
    background: #fde6a9;
}
.page {
    position: relative;
    width: 816px;
    border-right: 1px solid #bbb;
    padding: 1px 0 0 96px;
    background: repeating-linear-gradient(90deg, #bbb 0 6px, white 6px 8px) 0 0 / 100% 1px no-repeat white;
}
.bottom-band .page {
    border-bottom: 1px solid #bbb;
}
.grid {
    display: flow-root;
    width: 625px;
    height: 100%;
    background-image:
        repeating-linear-gradient(white 0 4px, #bbb 4px 8px),
        repeating-linear-gradient(white 0 4px, #bbb 4px 8px),
        linear-gradient(#e0e0e0 1px, transparent 1px),
        linear-gradient(90deg, #e0e0e0 1px, transparent 1px),
        linear-gradient(#f0f0f0 1px, transparent 1px),
        linear-gradient(90deg, #f0f0f0 1px, transparent 1px);
    background-size: 1px 100%, 1px 100%, 48px 48px, 48px 48px, 12px 12px, 12px 12px;
    background-position: 0 0, 100% 0, 0 -1px, 0 -1px, 0 -1px, 0 -1px;
    background-repeat: no-repeat, no-repeat, repeat, repeat, repeat, repeat;
}
.selection {
    width: 624px;
    height: 405px;
    margin-top: -1px;
    border: 3px solid #add8e6;
}
.label-item {
    position: absolute;
    left: 109px;
    top: 23px;
    width: 284px;
    height: 59px;
    padding: 0 2px 0 1px;
    border: 1px solid #bbb;
    font-family: "Liberation Sans", sans-serif;
    font-size: 13px;
    line-height: 14px;
    color: black;
    display: flex;
    align-items: flex-start;
    justify-content: space-between;
}
.smart-tags {
    position: absolute;
    left: 726px;
    top: 0;
    display: flex;
    flex-direction: column;
    gap: 4px;
}
.smart-tags button {
    width: 22px;
    height: 22px;
    background: white;
    border: 1px solid #8f8f8f;
    color: #606060;
}

/* Analyzer */
.analyzer {
    height: 136px;
    flex: none;
    border-top: 1px solid #ababab;
    background: white;
}
.pane-title {
    display: flex;
    align-items: center;
    gap: 15px;
    height: 32px;
    padding: 0 11px 0 8px;
    background: #f7f7f7;
}
.pane-title h2 {
    flex: 1;
    padding-top: 2px;
    font-size: 15px;
    line-height: 20px;
    color: #999;
}
.analyzer-bar {
    display: flex;
    align-items: center;
    height: 30px;
    padding: 0 4px 0 7px;
    background: #f7f7f7;
}
.show-all {
    width: 150px;
    margin-right: 4px;
}
.filter-btn {
    height: 28px;
    gap: 5px;
    padding: 0 4px 0 5px;
    background: #bababa;
}
.analyzer-bar .vsep {
    height: 28px;
}
.clear-filter {
    margin-left: 4px;
}
.analyzer-bar input {
    width: 250px;
    margin-left: auto;
}
table {
    width: 100%;
    table-layout: fixed;
    border-collapse: collapse;
    background: #f7f7f7;
}
th {
    height: 20px;
    padding: 0 4px;
    font-weight: normal;
    text-align: left;
    border-left: 1px solid #ababab;
    border-bottom: 1px solid #ababab;
}
th:first-child {
    border-left: none;
}
.c-icon {
    width: 15px;
}
.c-mark {
    width: 25px;
}
.c-code {
    width: 70px;
}
.c-source {
    width: 151px;
}

/* Right side */
.side {
    width: 391px;
    flex: none;
    display: flex;
    flex-direction: column;
    border-left: 1px solid #ababab;
}
.explorer {
    flex: 1;
    display: flex;
    flex-direction: column;
    border-bottom: 1px solid #ababab;
}
.tree {
    flex: 1;
    list-style: none;
    margin: 0;
    padding: 0;
    background: white;
}
.tree li {
    display: flex;
    height: 20px;
    padding-left: 20px;
}
.tree .l1 {
    padding-left: 40px;
}
.tree .l2 {
    padding-left: 60px;
}
.tree span {
    flex: 1;
    display: flex;
    align-items: center;
    gap: 4px;
}
.label-icon {
    width: 16px;
    font-size: 15px;
    text-align: center;
    color: #4272a3;
}
.tree .open::before {
    content: "";
    width: 6px;
    height: 6px;
    margin: 7px 7px 0 -13px;
    background: linear-gradient(135deg, transparent 50%, #3c3c3c 50%);
}
.selected span {
    background: #e5f1fa;
}
.side-tabs {
    display: flex;
    height: 22px;
}
.side-tabs button {
    padding: 0 6px;
    border-top: 1px solid #ababab;
}
.side-tabs .current {
    border-top: none;
    border-right: 1px solid #ababab;
}
.side-tabs::after {
    content: "";
    flex: 1;
    border-top: 1px solid #ababab;
}
.properties {
    height: 350px;
    flex: none;
    overflow: hidden;
}
.properties .pane-title {
    margin-bottom: 4px;
}
.object-pick {
    margin: 0 4px;
}
.object-pick .i16 {
    position: absolute;
    left: 6px;
    top: 3px;
}
.object-pick select {
    padding-left: 24px;
}
.prop-bar {
    display: flex;
    align-items: center;
    gap: 2px;
    height: 35px;
    padding: 1px 4px 0 5px;
    border-bottom: 1px solid #ababab;
}
.prop-bar button {
    width: 26px;
    height: 26px;
}
.prop-bar .on {
    background: #dbebf5;
}
.prop-bar .arrow {
    width: 10px;
    margin-left: -4px;
}
.prop-bar input {
    flex: 1;
    min-width: 0;
    margin-left: 8px;
}
.prop-list {
    display: flex;
    flex-direction: column;
    gap: 7px;
    padding: 4px 10px 0 25px;
}
.prop {
    display: flex;
    align-items: flex-start;
}
.prop.first {
    padding-bottom: 4px;
}
.prop .name {
    flex: 1;
    line-height: 22px;
    height: 20px;
    color: black;
}
.prop.first .name {
    padding-top: 3px;
}
.value {
    width: 152px;
    display: flex;
    flex-direction: column;
    gap: 4px;
}
.first .value {
    gap: 6px;
}
.value .line {
    height: 22px;
}
.value .tool, .value .glyph {
    height: 22px;
}
.sub {
    width: 62px;
    padding-top: 4px;
}
.value .size {
    width: 40px;
}
.swatch {
    width: 152px;
    height: 20px;
    background: black;
    border: 1px solid #ababab;
}
.swatch.clear {
    background: repeating-conic-gradient(#d4d4d4 0 25%, white 0 50%) 0 0 / 8px 8px;
}
input[type="checkbox"] {
    appearance: none;
    width: 8px;
    height: 8px;
    margin: 6px 8px 0 6px;
    border: 1px solid #999;
    background: white;
}
input[type="checkbox"]:checked {
    border-color: #3c3c3c;
    background: #aaa;
}
.func {
    width: 11px;
    height: 12px;
    margin-top: 4px;
    color: #8f8f8f;
}
```
